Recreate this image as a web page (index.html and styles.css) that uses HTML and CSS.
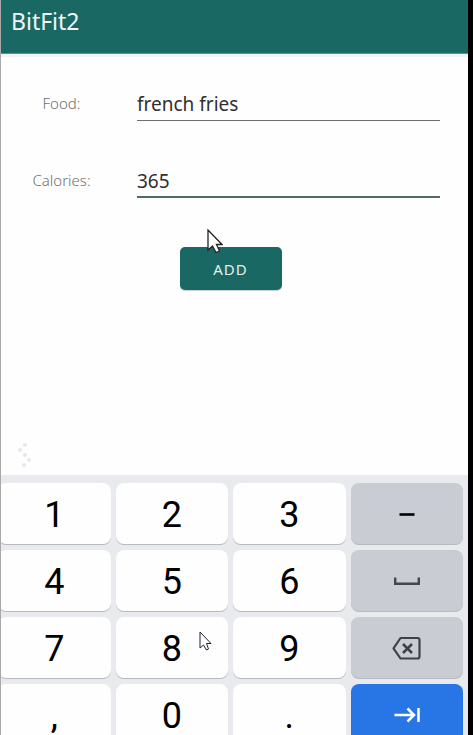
FILE: index.html
```html
<!DOCTYPE html>
<html lang="en">
<head>
<meta charset="utf-8">
<meta name="viewport" content="width=device-width, initial-scale=1">
<title>BitFit2</title>
<link rel="stylesheet" href="styles.css">
</head>
<body>
<div class="screen">
  <header class="app-bar"><h1 class="app-title">BitFit2</h1></header>
  <main class="content">
    <form class="entry-form">
      <div class="field">
        <label class="field-label" for="food">Food:</label>
        <input class="field-input" id="food" type="text" value="french fries">
      </div>
      <div class="field">
        <label class="field-label" for="calories">Calories:</label>
        <input class="field-input field-input-active" id="calories" type="text" inputmode="numeric" value="365">
      </div>
      <div class="actions">
        <button class="add-button" type="button">ADD</button>
        <svg class="pointer pointer-form" width="16" height="25" viewBox="0 0 16 25" aria-hidden="true"><path d="M1 1V21L5.500 17L9 23.500L12.500 22L9.500 15.500H15Z" fill="#fff" stroke="#222" stroke-width="1.300"/></svg>
      </div>
    </form>
    <svg class="dots" width="14" height="25" viewBox="0 0 14 25" fill="#e8e8e8" aria-hidden="true"><circle cx="7" cy="3" r="2"/><circle cx="2" cy="8" r="2"/><circle cx="7" cy="13" r="2"/><circle cx="11" cy="18" r="2"/><circle cx="6" cy="23" r="2"/></svg>
  </main>
  <section class="keyboard" aria-label="Number pad">
    <button class="key" type="button">1</button>
    <button class="key" type="button">2</button>
    <button class="key" type="button">3</button>
    <button class="key key-side" type="button" aria-label="Minus"><svg width="30" height="30" viewBox="0 0 30 30" aria-hidden="true"><path d="M7.500 14.500H22.500" fill="none" stroke="#000" stroke-width="2.600"/></svg></button>
    <button class="key" type="button">4</button>
    <button class="key" type="button">5</button>
    <button class="key" type="button">6</button>
    <button class="key key-side" type="button" aria-label="Space"><svg width="30" height="30" viewBox="0 0 30 30" aria-hidden="true"><path d="M3.200 10.500V16.700H26.800V10.500" fill="none" stroke="#454748" stroke-width="2.400"/></svg></button>
    <button class="key" type="button">7</button>
    <button class="key key-cursor" type="button">8<svg class="pointer pointer-key" width="13" height="20" viewBox="0 0 13 20" aria-hidden="true"><path d="M1 1V17L4.500 14L7.500 19L9.500 18L7.500 12.500H12Z" fill="#fff" stroke="#223" stroke-width="1"/></svg></button>
    <button class="key" type="button">9</button>
    <button class="key key-side" type="button" aria-label="Delete"><svg width="30" height="30" viewBox="0 0 30 30" fill="none" stroke="#3f4244" stroke-width="2.200" aria-hidden="true"><path d="M8.500 4H25.500Q27.500 4 27.500 6V22.500Q27.500 24.500 25.500 24.500H8.500L1.500 14.300Z" stroke-linejoin="round"/><path d="M11 10L20 19M20 10L11 19" stroke-width="2.500"/></svg></button>
    <button class="key" type="button">,</button>
    <button class="key" type="button">0</button>
    <button class="key" type="button">.</button>
    <button class="key key-next" type="button" aria-label="Next"><svg width="30" height="30" viewBox="0 0 30 30" fill="none" stroke="#fff" stroke-width="2.500" aria-hidden="true"><path d="M2.500 14H21.500M15.500 7.500L22 14L15.500 20.500M26.500 7V21"/></svg></button>
  </section>
</div>
</body>
</html>
```
FILE: styles.css
```css
* { box-sizing: border-box; }

body {
  margin: 0;
  font-family: "Noto Sans", "Open Sans", sans-serif;
  background: #fefefe;
}

.screen {
  display: flex;
  flex-direction: column;
  height: 100vh;
  overflow: hidden;
  border-left: 1px solid #a9a9a9;
  border-right: 5px solid #000;
}

.app-bar {
  flex: none;
  padding: 7px 10px 18px;
  background: #1a6864;
  border-bottom: 1px solid #5c918e;
  box-shadow: 0 3px 0 #f2f2f2;
}

.app-title {
  margin: 0;
  color: #f1f6f5;
  font-size: 23px;
  font-weight: 400;
  line-height: 28px;
}

.content {
  display: flex;
  flex: 1;
  flex-direction: column;
  justify-content: space-between;
  padding: 31px 28px 8px 15px;
}

.entry-form {
  display: flex;
  flex-direction: column;
  gap: 41px;
}

.field {
  display: flex;
  align-items: center;
  gap: 30px;
}

.field-label {
  width: 91px;
  color: #707070;
  font-size: 15px;
  font-weight: 300;
  line-height: 36px;
  text-align: center;
}

.field-input {
  flex: 1;
  min-width: 0;
  height: 36px;
  padding: 2px 0 0;
  color: #303030;
  background: transparent;
  border: 0;
  border-bottom: 1px solid #6c7170;
  outline: 0;
  font: inherit;
  font-size: 19px;
}

.field-input-active {
  padding-top: 4px;
  border-bottom: 2px solid #526967;
}

.actions {
  position: relative;
  align-self: center;
  margin: 8px 0 0 5px;
}

.add-button {
  display: block;
  width: 102px;
  height: 43px;
  padding: 0;
  color: #e3efee;
  background: #1a6864;
  border: 0;
  border-radius: 5px;
  box-shadow: 0 1px 1px #c5cfce;
  font: inherit;
  font-size: 15px;
  letter-spacing: 1px;
}

.pointer { position: absolute; }
.pointer-form { top: -18px; left: 27px; }
.pointer-key { top: 14px; right: 16px; }

.dots { margin-left: 2px; }

.keyboard {
  display: grid;
  flex: none;
  grid-template-columns: repeat(4, 1fr);
  grid-auto-rows: 61px;
  gap: 6px 5px;
  height: 260px;
  padding: 8px 5px 0 0;
  margin-left: -3px;
  background: #e8eaed;
}

.key {
  display: flex;
  align-items: center;
  justify-content: center;
  min-width: 0;
  padding: 3px 0 0;
  color: #000;
  background: #fefefe;
  border: 0;
  border-radius: 8px;
  box-shadow: 0 1px 0 #b6b9bd;
  font-family: Roboto, sans-serif;
  font-size: 36px;
  line-height: 42px;
}

.key-side { background: #caccd4; }
.key-next { background: #2876e6; }
.key-cursor { position: relative; }
```
